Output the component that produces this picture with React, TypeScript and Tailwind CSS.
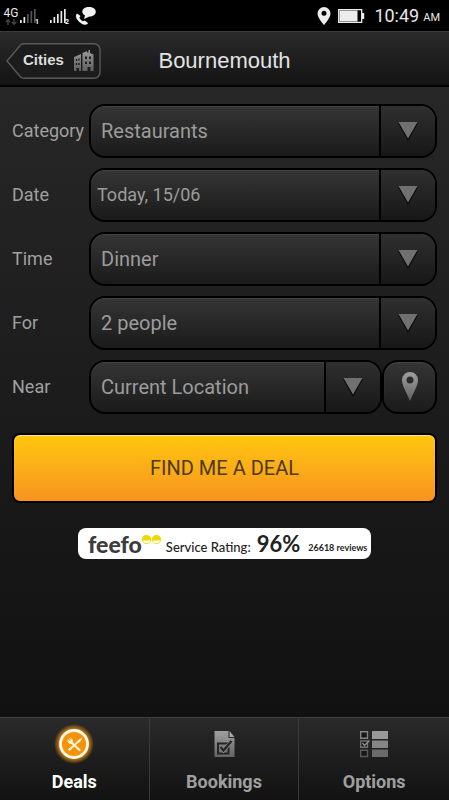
import { useState } from "react";
import type { ReactNode } from "react";

const fieldFrame =
  "grid min-w-0 flex-1 grid-cols-[minmax(0,1fr)_56px] overflow-hidden rounded-2xl border-2 border-black bg-linear-to-b from-[#353535] to-[#1b1b1b] shadow-[inset_0_1px_1px_#454545]";

const signalBars = [3, 6, 9, 12, 14];

function Signal({ sim, strength }: { sim: string; strength: number }) {
  return (
    <svg width="22" height="22" viewBox="0 0 22 22" aria-hidden="true">
      {signalBars.map((h, i) => (
        <rect key={h} x={1 + i * 3.5} y={18 - h} width="1.7" height={h} fill={i < strength ? "#e8e8e8" : "#555"} />
      ))}
      <text x="16" y="19" fontSize="7" fontWeight="700" fontFamily="Roboto, sans-serif" fill="#fff">
        {sim}
      </text>
    </svg>
  );
}

function StatusBar() {
  return (
    <div className="flex h-[31px] items-center justify-between bg-black pl-[3px] pr-[9px] text-[#e8e8e8]">
      <div className="flex items-center">
        <div className="flex w-4 flex-col items-center">
          <span className="text-xs leading-3">4G</span>
          <svg width="12" height="6" viewBox="0 0 12 6" fill="none" stroke="#444" strokeWidth="1.4" aria-hidden="true">
            <path d="M3 6V1M.8 3 3 .8 5.200 3M9 0v5M6.800 3 9 5.200 11.200 3" />
          </svg>
        </div>
        <Signal sim="1" strength={2} />
        <div className="w-2" />
        <Signal sim="2" strength={5} />
        <svg className="ml-1" width="22" height="20" viewBox="0 0 22 20" fill="#f2f2f2" aria-hidden="true">
          <path d="M14 1c3.800 0 6.800 1.800 6.800 4.700S17.800 10.500 14.500 10.500L9 13l1-3.500C8.300 8.500 7.300 7.200 7.300 5.700 7.300 2.800 10.200 1 14 1Z" />
          <path d="M2 7.500C.6 8.700.5 11 2.200 13.500c2.300 3.300 5.600 5.500 8.300 5.300 1.200-.1 2.200-.8 2.500-1.800l-3.200-2.600-2 .9c-1.500-.8-2.700-2.100-3.400-3.800l1.200-1.600Z" />
        </svg>
      </div>
      <div className="flex items-center">
        <svg width="14" height="18" viewBox="0 0 14 18" fill="#ececec" aria-hidden="true">
          <path fillRule="evenodd" d="M7 0a6.500 6.500 0 0 1 6.500 6.500C13.500 11 7 18 7 18S.5 11 .5 6.500A6.500 6.500 0 0 1 7 0Zm0 3.800a2.500 2.500 0 1 0 0 5 2.500 2.500 0 0 0 0-5Z" />
        </svg>
        <svg className="ml-[7px]" width="27" height="14" viewBox="0 0 27 14" aria-hidden="true">
          <path d="M.7.7h23v12.600h-23Z" fill="none" stroke="#ececec" strokeWidth="1.300" />
          <path d="M1.500 1.500h18v11h-18ZM24 4h2.200v6H24Z" fill="#ececec" />
        </svg>
        <span className="ml-[9px] text-lg leading-6">10:49</span>
        <span className="ml-1 pt-1 text-[11px] leading-5">AM</span>
      </div>
    </div>
  );
}

function Header() {
  return (
    <header className="grid h-14 grid-cols-[1fr_auto_1fr] items-center border-t border-b-2 border-t-[#3a3a3a] border-b-black bg-linear-to-b from-[#2b2b2b] to-[#131313] px-1.5 pt-1 font-['Liberation_Sans',Arial,sans-serif] shadow-[0_1px_0_#303030]">
      <button type="button" className="relative flex h-9 w-[95px] items-center justify-between pl-[17px] pr-[7px] text-[15px] font-bold text-[#dedede]">
        <svg className="absolute inset-0" width="95" height="36" viewBox="0 0 95 36" aria-hidden="true">
          <path d="M1 18 14.500 2Q16 .8 18 .8h70a6 6 0 0 1 6 6v22.400a6 6 0 0 1-6 6H18Q16 35.200 14.500 34Z" fill="#1c1c1c" stroke="#5a5a5a" strokeWidth="1.400" />
        </svg>
        <span className="relative">Cities</span>
        <svg className="relative" width="20" height="22" viewBox="0 0 20 22" aria-hidden="true">
          <defs>
            <linearGradient id="towers" x2="0" y2="1">
              <stop stopColor="#999" />
              <stop offset="1" stopColor="#606060" />
            </linearGradient>
          </defs>
          <path
            fill="url(#towers)"
            fillRule="evenodd"
            d="M0 7 7 4v17H5v-3H2.500v3H0ZM1.800 9v2h1.400V9Zm2.500-.5v2h1.400v-2ZM1.800 13v2h1.400v-2Zm2.500 0v2h1.400v-2ZM8.500 3l4.500-2v1.500h1.500V0H16v3l3.500 1.500V21H16.500v-4h-3v4h-5ZM11 6.500v2.500h2V6.500Zm4 0v2.500h2V6.500Zm-4 5v2.500h2v-2.500Zm4 0v2.500h2v-2.500Z"
          />
        </svg>
      </button>
      <h1 className="text-[22px] leading-7 text-[#e2e2e2]">Bournemouth</h1>
    </header>
  );
}

function Arrow() {
  return (
    <span className="pointer-events-none col-start-2 row-start-1 flex items-center justify-center border-l-2 border-black bg-linear-to-b from-[#303030] to-[#171717]">
      <svg width="20" height="19" viewBox="0 0 20 19" aria-hidden="true">
        <path d="M0 1h20L10 19Z" fill="#080808" />
        <path d="M.5 0h19L10 16.500Z" fill="#707070" />
      </svg>
    </span>
  );
}

function Field({ id, label, children }: { id: string; label: string; children: ReactNode }) {
  return (
    <div className="flex h-[54px] items-stretch">
      <label htmlFor={id} className="w-[77px] shrink-0 self-center text-lg text-[#a0a0a0]">
        {label}
      </label>
      {children}
    </div>
  );
}

function Picker({ id, options }: { id: string; options: string[] }) {
  const [value, setValue] = useState(options[0]);
  return (
    <div className={fieldFrame}>
      <select
        id={id}
        value={value}
        onChange={(e) => setValue(e.target.value)}
        className="col-span-2 col-start-1 row-start-1 appearance-none bg-transparent pl-2.5 pr-16 text-xl text-[#9c9c9c] outline-none"
      >
        {options.map((option) => (
          <option key={option}>{option}</option>
        ))}
      </select>
      <Arrow />
    </div>
  );
}

function Eye({ x }: { x: number }) {
  return (
    <g transform={`translate(${x} 0)`}>
      <circle cx="4.500" cy="4.500" r="4.200" fill="#fff" stroke="#efd900" strokeWidth=".9" />
      <path d="M.2 4.500a4.300 4.300 0 0 1 8.600 0L8.300 5.500H.7Z" fill="#efd900" />
    </g>
  );
}

function FeefoBadge() {
  return (
    <a
      href="#reviews"
      className="mx-auto mt-[25px] flex h-[31px] w-[293px] items-center rounded-lg bg-white pl-2.5 font-[Lato,sans-serif] text-[#222] whitespace-nowrap"
    >
      <span className="text-[23px] leading-7 font-black text-[#3c3c3c]">feefo</span>
      <svg className="mb-2" width="20" height="10" viewBox="0 0 20 10" aria-hidden="true">
        <Eye x={0} />
        <Eye x={10} />
      </svg>
      <span className="ml-1 pt-1.5 text-[13px] leading-4 font-medium">Service Rating:</span>
      <span className="ml-1.5 text-[22px] leading-7 font-bold">96%</span>
      <span className="ml-2 pt-2 text-[9px] leading-4 font-bold">26618 reviews</span>
    </a>
  );
}

function DealsIcon() {
  return (
    <svg width="40" height="40" viewBox="0 0 40 40" aria-hidden="true">
      <defs>
        <radialGradient id="glow">
          <stop offset=".7" stopColor="#f59a12" stopOpacity=".85" />
          <stop offset="1" stopColor="#f59a12" stopOpacity="0" />
        </radialGradient>
      </defs>
      <circle cx="20" cy="20" r="20" fill="url(#glow)" />
      <circle cx="20" cy="20" r="13.500" fill="#f39309" stroke="#fff8e6" strokeWidth="2.800" />
      <path d="m14 25.500 9-8q2.500-3.500 5-3.500-.5 3-4.500 5.500L15.500 27Z" fill="#fff3dc" />
      <path d="m25.500 26-8-7.500" stroke="#fff3dc" strokeWidth="2.200" strokeLinecap="round" />
      <path d="M12.500 15.800q2 4.500 5 4.200 2.200-1.500 1-4.500L16 12.800l1.800 3.700-3.300-3.200 2.200 4.200-3.700-2.700 2.500 4Z" fill="#fff3dc" />
    </svg>
  );
}

function BookingsIcon() {
  return (
    <svg width="40" height="40" viewBox="0 0 40 40" aria-hidden="true">
      <defs>
        <linearGradient id="metal" x2="0" y2="1">
          <stop stopColor="#a0a0a0" />
          <stop offset="1" stopColor="#646464" />
        </linearGradient>
      </defs>
      <path d="M10.500 7h14v7h6v19h-20Z" fill="url(#metal)" />
      <path d="m25.500 7 5 6h-5Z" fill="#a8a8a8" />
      <path d="M14 19.500h10.500v10H14Z" fill="none" stroke="#252525" strokeWidth="2" />
      <path d="m16.500 23 3 3.500 8-9" fill="none" stroke="#858585" strokeWidth="4" />
      <path d="m16.500 23 3 3.500 8-9.500" fill="none" stroke="#252525" strokeWidth="2.200" />
    </svg>
  );
}

function OptionsIcon() {
  return (
    <svg width="40" height="40" viewBox="0 0 40 40" aria-hidden="true">
      <path d="M18 7h16v8H18Z" fill="#999" />
      <path d="M18 16.500h16v7.500H18Z" fill="#858585" />
      <path d="M18 25.500h16V33H18Z" fill="#6b6b6b" />
      <g fill="#171717" strokeWidth="1.400">
        <path d="M6.700 7.700h6.800v6.600H6.700Z" stroke="#858585" />
        <path d="M6.700 17h6.800v6.300H6.700Z" stroke="#707070" />
        <path d="M6.700 26.200h6.800v6.300H6.700Z" stroke="#575757" />
        <path d="m8.500 19 2 2.500 5-5" stroke="#929292" fill="none" />
      </g>
    </svg>
  );
}

const tabs = [
  { name: "Deals", icon: <DealsIcon /> },
  { name: "Bookings", icon: <BookingsIcon /> },
  { name: "Options", icon: <OptionsIcon /> },
];

export default function App() {
  const [activeTab, setActiveTab] = useState("Deals");

  return (
    <div className="flex min-h-screen flex-col bg-[#111] font-[Roboto,sans-serif]">
      <StatusBar />
      <Header />

      <main className="flex-1 bg-linear-to-b from-[#272727] to-[#111] px-3 pt-[17px]">
        <form className="flex flex-col gap-2.5" onSubmit={(e) => e.preventDefault()}>
          <Field id="category" label="Category">
            <Picker id="category" options={["Restaurants", "Spas", "Hotels"]} />
          </Field>
          <Field id="date" label="Date">
            <div className={fieldFrame}>
              <button id="date" type="button" className="col-span-2 col-start-1 row-start-1 pl-1.5 text-left text-lg text-[#9c9c9c]">
                Today, 15/06
              </button>
              <Arrow />
            </div>
          </Field>
          <Field id="time" label="Time">
            <Picker id="time" options={["Dinner", "Lunch", "Breakfast"]} />
          </Field>
          <Field id="party" label="For">
            <Picker id="party" options={["2 people", "3 people", "4 people"]} />
          </Field>
          <Field id="near" label="Near">
            <Picker id="near" options={["Current Location", "City Centre"]} />
            <button
              type="button"
              aria-label="Use my location"
              className="flex w-[55px] shrink-0 items-center justify-center rounded-2xl border-2 border-black bg-linear-to-b from-[#353535] to-[#1b1b1b] shadow-[inset_0_1px_1px_#454545]"
            >
              <svg width="18" height="30" viewBox="0 0 18 30" aria-hidden="true">
                <defs>
                  <linearGradient id="pin" x2="0" y2="1">
                    <stop stopColor="#a0a0a0" />
                    <stop offset="1" stopColor="#606060" />
                  </linearGradient>
                </defs>
                <path fill="url(#pin)" fillRule="evenodd" d="M9 0a8 8 0 0 1 8 8C17 14 12 21 9 29 6 21 1 14 1 8a8 8 0 0 1 8-8Zm0 4.500a3.500 3.500 0 1 0 0 7 3.500 3.500 0 0 0 0-7Z" />
              </svg>
            </button>
          </Field>

          <button
            type="submit"
            className="mt-[9px] h-[70px] rounded-lg border-2 border-black bg-linear-to-b from-[#ffc70c] to-[#f7931e] text-xl text-[#4b3a13] shadow-[inset_0_1px_1px_#ffe08a]"
          >
            FIND ME A DEAL
          </button>
        </form>

        <FeefoBadge />
      </main>

      <nav className="grid h-[83px] grid-cols-3 border-t border-[#404040] bg-linear-to-b from-[#2a2a2a] to-[#121212]">
        {tabs.map((tab) => (
          <button
            key={tab.name}
            type="button"
            onClick={() => setActiveTab(tab.name)}
            className={`flex flex-col items-center gap-1.5 border-r border-[#3a3a3a] pt-1.5 text-lg leading-6 font-bold last:border-r-0 ${
              activeTab === tab.name ? "text-white" : "text-[#a0a0a0]"
            }`}
          >
            {tab.icon}
            {tab.name}
          </button>
        ))}
      </nav>
    </div>
  );
}
